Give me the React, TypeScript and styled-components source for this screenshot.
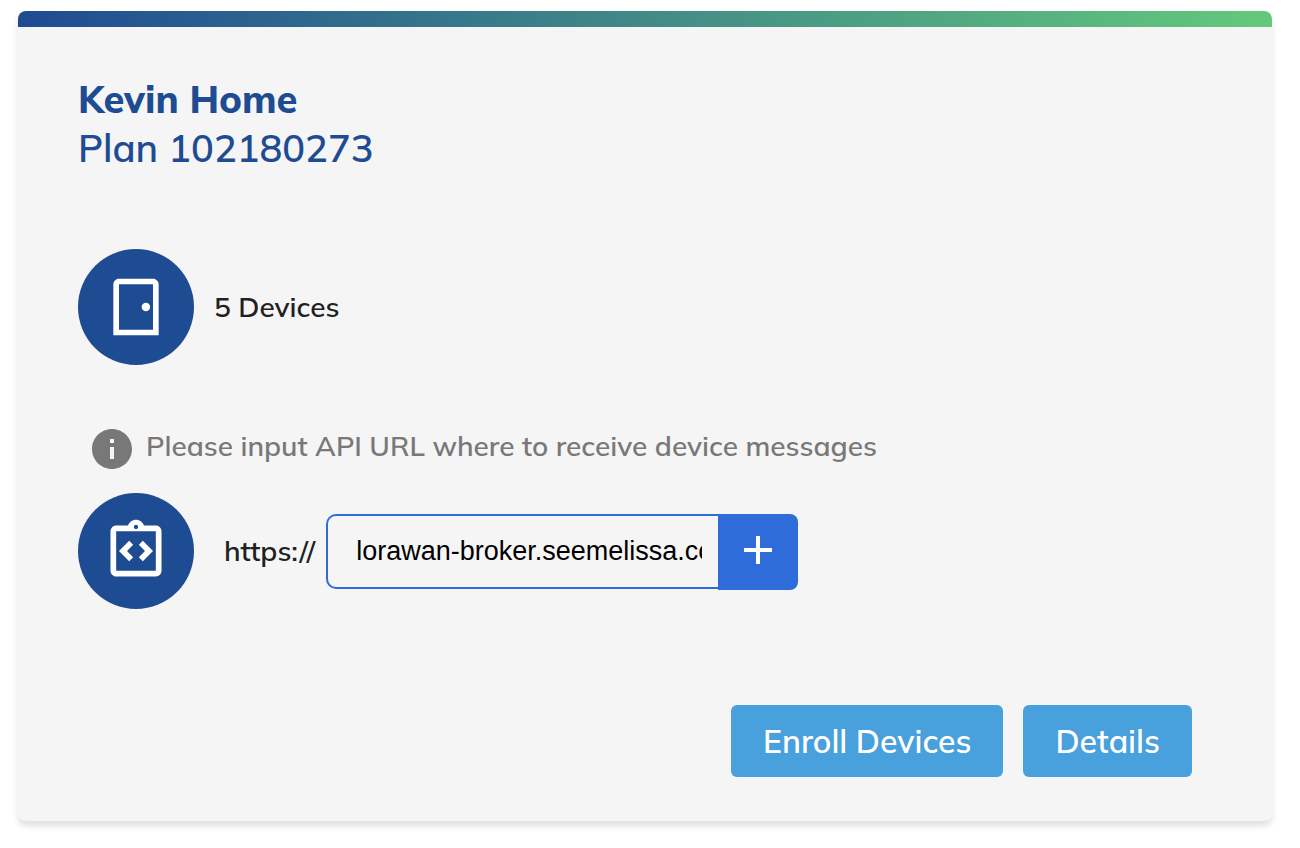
import React, { useState } from "react";
import styled, { createGlobalStyle } from "styled-components";
import {
  MdAdd,
  MdInfo,
  MdOutlineIntegrationInstructions,
  MdOutlineSensorDoor,
} from "react-icons/md";

const GlobalStyle = createGlobalStyle`
  *, *::before, *::after {
    box-sizing: border-box;
  }
  body {
    margin: 0;
    background: #ffffff;
    color: #212121;
    font-family: Mulish, Muli, "Open Sans", sans-serif;
    font-weight: 600;
  }
`;

const Page = styled.main`
  padding: 11px 28px 26px 18px;
`;

const Card = styled.section`
  overflow: hidden;
  border-radius: 8px;
  background: #f5f5f5;
  box-shadow: 0 5px 6px rgba(0, 0, 0, 0.12);
`;

const Accent = styled.div`
  height: 16px;
  background: linear-gradient(to right, #1f4b93, #64c97c);
`;

const Body = styled.div`
  padding: 48px 80px 44px 60px;
`;

const Heading = styled.h1<{ $strong?: boolean }>`
  margin: 0;
  color: #1e4c92;
  font-size: 38px;
  line-height: 49px;
  font-weight: ${(p) => (p.$strong ? 800 : 600)};
`;

const Row = styled.div<{ $top: number; $gap: number }>`
  display: flex;
  align-items: center;
  gap: ${(p) => p.$gap}px;
  margin-top: ${(p) => p.$top}px;
`;

const Disc = styled.div`
  display: grid;
  place-items: center;
  flex: none;
  width: 116px;
  height: 116px;
  border-radius: 50%;
  background: #1e4c92;
  color: #ffffff;
`;

const Text = styled.span`
  font-size: 28px;
  line-height: 40px;
`;

const Hint = styled.p`
  display: flex;
  align-items: flex-start;
  gap: 10px;
  margin: 60px 0 20px 10px;
  color: #787878;
  font-size: 28px;
  line-height: 42px;
`;

const Field = styled.div`
  display: flex;
  align-items: center;
  gap: 11px;
`;

const Label = styled.label`
  font-size: 28px;
  line-height: 40px;
`;

const InputGroup = styled.div`
  display: flex;
  padding-top: 2px;
`;

const UrlInput = styled.input`
  width: 392px;
  height: 75px;
  padding: 0 16px 0 28px;
  border: 2px solid #2e6cd9;
  border-right: 0;
  border-radius: 10px 0 0 10px;
  outline: 0;
  background: transparent;
  color: #000000;
  font-family: Arial, "Liberation Sans", sans-serif;
  font-size: 27px;
`;

const AddButton = styled.button`
  display: grid;
  place-items: center;
  width: 80px;
  height: 76px;
  padding: 0 0 4px;
  border: 0;
  border-radius: 0 8px 8px 0;
  background: #2e6cd9;
  color: #ffffff;
  cursor: pointer;
`;

const Actions = styled.div`
  display: flex;
  justify-content: flex-end;
  gap: 20px;
  margin-top: 96px;
`;

const ActionButton = styled.button`
  height: 72px;
  padding: 0 32px;
  border: 0;
  border-radius: 6px;
  background: #48a0dc;
  color: #ffffff;
  font-family: inherit;
  font-size: 32px;
  font-weight: 600;
  line-height: 40px;
  cursor: pointer;
`;

export default function App() {
  const [url, setUrl] = useState("lorawan-broker.seemelissa.com");

  return (
    <>
      <GlobalStyle />
      <Page>
        <Card>
          <Accent />
          <Body>
            <Heading $strong>Kevin Home</Heading>
            <Heading as="p">Plan 102180273</Heading>

            <Row $top={76} $gap={20}>
              <Disc>
                <MdOutlineSensorDoor size={68} />
              </Disc>
              <Text>5 Devices</Text>
            </Row>

            <Hint>
              <MdInfo size={48} />
              Please input API URL where to receive device messages
            </Hint>

            <Row $top={0} $gap={30}>
              <Disc>
                <MdOutlineIntegrationInstructions size={68} />
              </Disc>
              <Field>
                <Label htmlFor="api-url">https://</Label>
                <InputGroup>
                  <UrlInput
                    id="api-url"
                    type="text"
                    value={url}
                    onChange={(e) => setUrl(e.target.value)}
                  />
                  <AddButton type="button" aria-label="Add URL">
                    <MdAdd size={48} />
                  </AddButton>
                </InputGroup>
              </Field>
            </Row>

            <Actions>
              <ActionButton type="button">Enroll Devices</ActionButton>
              <ActionButton type="button">Details</ActionButton>
            </Actions>
          </Body>
        </Card>
      </Page>
    </>
  );
}
